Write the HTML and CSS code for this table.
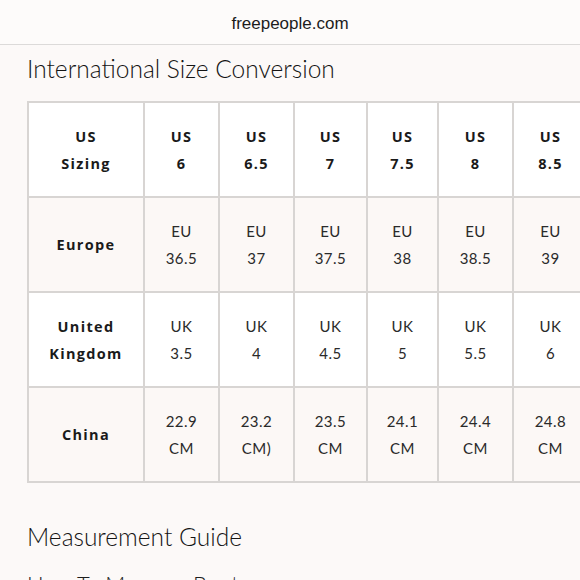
FILE: index.html
```html
<!DOCTYPE html>
<html lang="en">
<head>
<meta charset="utf-8">
<title>Size Guide</title>
<link rel="stylesheet" href="styles.css">
</head>
<body>
<header class="topbar">freepeople.com</header>
<main class="content">
  <h1 class="title">International Size Conversion</h1>
  <table class="sizes">
    <colgroup>
      <col class="c-label"><col class="c-a"><col class="c-a"><col class="c-b"><col class="c-c"><col class="c-a"><col class="c-a">
    </colgroup>
    <tr class="row-white">
      <th>US<br>Sizing</th>
      <th>US<br>6</th>
      <th>US<br>6.5</th>
      <th>US<br>7</th>
      <th>US<br>7.5</th>
      <th>US<br>8</th>
      <th>US<br>8.5</th>
    </tr>
    <tr class="row-tint">
      <th>Europe</th>
      <td>EU<br>36.5</td>
      <td>EU<br>37</td>
      <td>EU<br>37.5</td>
      <td>EU<br>38</td>
      <td>EU<br>38.5</td>
      <td>EU<br>39</td>
    </tr>
    <tr class="row-white">
      <th>United<br>Kingdom</th>
      <td>UK<br>3.5</td>
      <td>UK<br>4</td>
      <td>UK<br>4.5</td>
      <td>UK<br>5</td>
      <td>UK<br>5.5</td>
      <td>UK<br>6</td>
    </tr>
    <tr class="row-tint">
      <th>China</th>
      <td>22.9<br>CM</td>
      <td>23.2<br>CM)</td>
      <td>23.5<br>CM</td>
      <td>24.1<br>CM</td>
      <td>24.4<br>CM</td>
      <td>24.8<br>CM</td>
    </tr>
  </table>
  <h2 class="title guide">Measurement Guide</h2>
  <h3 class="subtitle">How To Measure Boots</h3>
</main>
</body>
</html>
```
FILE: styles.css
```css
html, body {
  margin: 0;
  padding: 0;
}
body {
  background: #fcf9f8;
  overflow: hidden;
  width: 580px;
  height: 580px;
  color: #222;
}
.topbar {
  height: 44px;
  line-height: 47px;
  text-align: center;
  font-family: "Liberation Sans", Arial, sans-serif;
  font-size: 17px;
  color: #1c1c1c;
  border-bottom: 1px solid #dcdad9;
  background: #fdfbfa;
}
.content {
  padding-left: 27px;
}
.title {
  font-family: Lato, "Open Sans", sans-serif;
  font-weight: 300;
  font-size: 24.5px;
  line-height: 30px;
  margin: 9px 0 0;
  color: #141414;
}
.sizes {
  border-collapse: collapse;
  table-layout: fixed;
  width: 560px;
  margin-top: 17px;
  border: 2px solid #d8d5d3;
}
.sizes th, .sizes td {
  border: 2px solid #d8d5d3;
  height: 93px;
  padding: 0;
  text-align: center;
  vertical-align: middle;
  line-height: 27px;
}
.c-label { width: 116px; }
.c-a { width: 75px; }
.c-b { width: 73px; }
.c-c { width: 71px; }
.sizes th {
  font-family: "Open Sans", sans-serif;
  font-weight: 700;
  font-size: 14.5px;
  letter-spacing: 1.3px;
  color: #1a1a1a;
}
.sizes td {
  font-family: Lato, sans-serif;
  font-weight: 400;
  font-size: 15px;
  letter-spacing: 0.5px;
  color: #2a2a2a;
}
.row-white th, .row-white td { background: #ffffff; }
.row-tint th, .row-tint td { background: #fcf8f6; }
.guide {
  margin-top: 39px;
}
.subtitle {
  font-family: Lato, sans-serif;
  font-weight: 300;
  font-size: 22px;
  line-height: 26px;
  margin: 19px 0 0;
  color: #1e1e1e;
}
```
